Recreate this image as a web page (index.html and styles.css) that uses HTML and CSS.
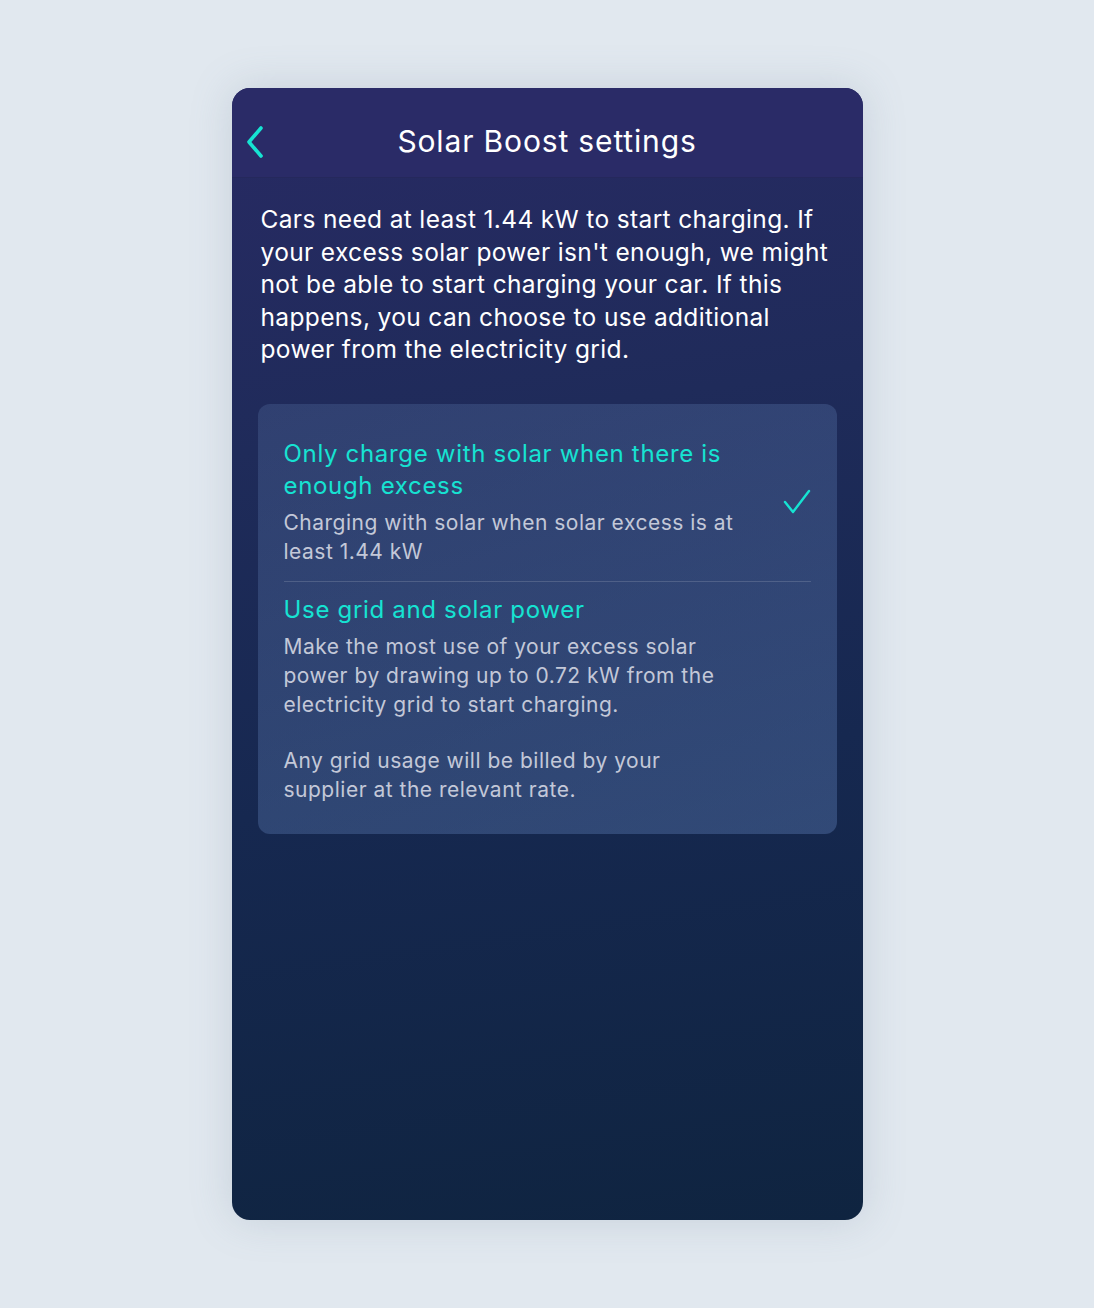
FILE: index.html
```html
<!DOCTYPE html>
<html lang="en">

<head>
  <meta charset="UTF-8" />
  <meta name="viewport" content="width=device-width, initial-scale=1.0" />
  <title>Solar Boost settings</title>
  <link rel="stylesheet" href="styles.css">
</head>

<body>

  <div class="phone">
    <header class="topbar">
      <button class="back" aria-label="Back">
        <svg width="22" height="34" viewBox="0 0 22 34">
          <path d="M17 3 L5 17 L17 31" fill="none" stroke="#16e3d2" stroke-width="3.6" stroke-linecap="round" stroke-linejoin="round" />
        </svg>
      </button>
      <h1>Solar Boost settings</h1>
    </header>

    <main class="content">
      <p class="intro">Cars need at least 1.44 kW to start charging. If your excess solar power isn't enough, we might not be able to start charging your car. If this happens, you can choose to use additional power from the electricity grid.</p>

      <div class="options">
        <div class="option selected">
          <div class="option-text">
            <h2>Only charge with solar when there is enough excess</h2>
            <p>Charging with solar when solar excess is at least 1.44 kW</p>
          </div>
          <svg class="check" width="28" height="26" viewBox="0 0 28 26">
            <path d="M2 13 L10 23 L26 2" fill="none" stroke="#16e3d2" stroke-width="2.4" stroke-linecap="round" stroke-linejoin="round" />
          </svg>
        </div>

        <div class="option">
          <div class="option-text">
            <h2>Use grid and solar power</h2>
            <p>Make the most use of your excess solar power by drawing up to 0.72 kW from the electricity grid to start charging.</p>
            <p class="note">Any grid usage will be billed by your supplier at the relevant rate.</p>
          </div>
        </div>
      </div>
    </main>
  </div>

</body>

</html>
```

FILE: styles.css
```css
body {
  margin: 0;
  background-color: #e1e8ef;
  font-family: Inter, "Noto Sans", sans-serif;
  padding: 88px 0 88px;
}

.phone {
  width: 631px;
  height: 1132px;
  margin: 0 auto;
  border-radius: 18px;
  overflow: hidden;
  background: linear-gradient(172deg, #282a64 0%, #1f2b5a 30%, #162850 60%, #0f2440 100%);
  box-shadow: 0 0 40px rgba(120, 140, 160, 0.25);
  display: flex;
  flex-direction: column;
}

.topbar {
  height: 90px;
  box-sizing: border-box;
  padding-top: 16px;
  background-color: #2a2b67;
  border-bottom: 1px solid #25285c;
  display: flex;
  align-items: center;
  justify-content: center;
  position: relative;
}

.topbar h1 {
  margin: 0;
  color: #fff;
  font-size: 30px;
  font-weight: 400;
  letter-spacing: 0.85px;
}

.back {
  position: absolute;
  left: 12px;
  top: 37px;
  background: none;
  border: none;
  padding: 0;
  cursor: pointer;
}

.content {
  padding: 25px 26px 0 26px;
}

.intro {
  margin: 0 0 38px 3px;
  color: #fff;
  font-size: 24.5px;
  line-height: 32.5px;
  letter-spacing: 0.35px;
}

.options {
  background: linear-gradient(160deg, rgba(95, 125, 175, 0.26) 0%, rgba(105, 140, 200, 0.34) 100%);
  border-radius: 12px;
  padding: 34px 26px 30px;
}

.option {
  display: flex;
  align-items: center;
  justify-content: space-between;
}

.option.selected {
  padding-bottom: 15px;
  border-bottom: 1px solid rgba(255, 255, 255, 0.15);
  margin-bottom: 12px;
}

.option-text {
  max-width: 458px;
}

.option h2 {
  margin: 0 0 6px;
  color: #16e3d2;
  font-size: 24px;
  line-height: 32px;
  font-weight: 400;
  letter-spacing: 0.68px;
}

.option p {
  margin: 0;
  color: #c3c8d8;
  font-size: 21px;
  line-height: 29px;
  letter-spacing: 0.5px;
}

.option p.note {
  margin-top: 27px;
}

.check {
  margin-right: 0;
}
```
